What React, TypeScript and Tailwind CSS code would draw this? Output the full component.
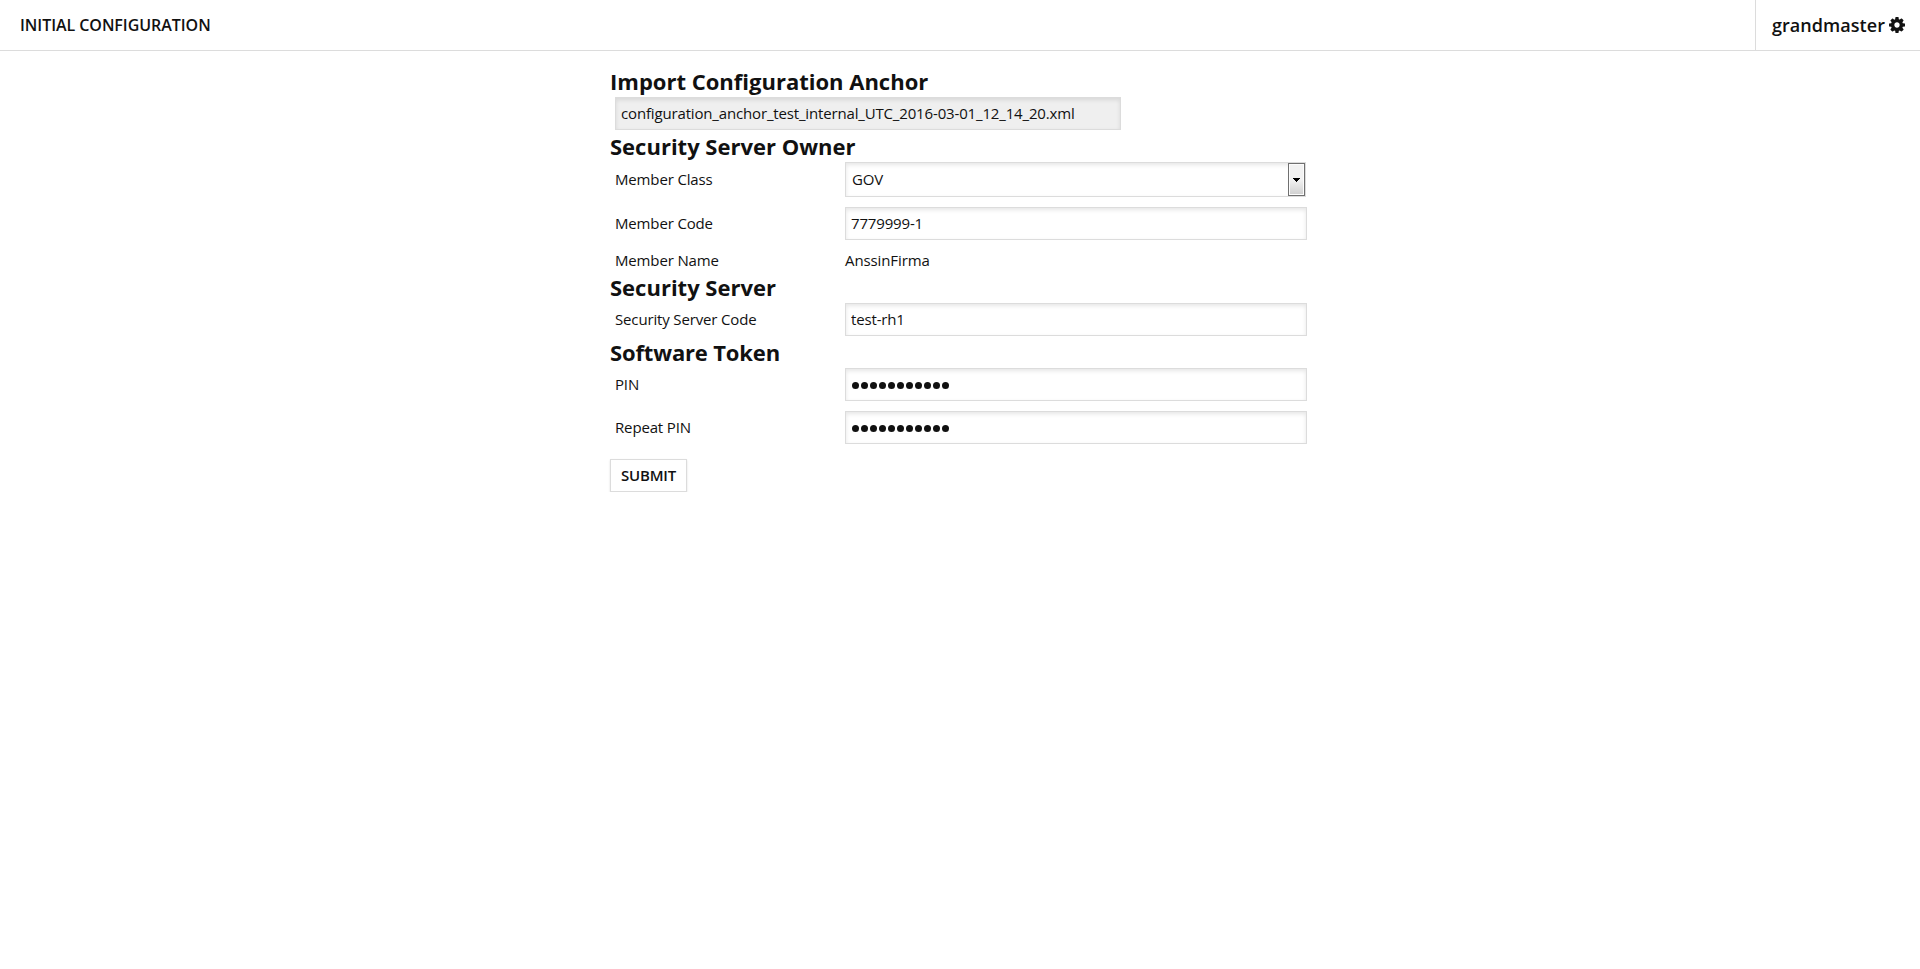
import type { ReactNode } from "react";

const field =
  "block h-[33px] border border-[#dcdcdc] px-[5px] pb-[2px] text-[15px] leading-[20px] tracking-[-0.158px] text-[#111] shadow-[inset_0_2px_4px_rgba(0,0,0,0.1)] outline-none";

function Heading({ children, tight = false }: { children: ReactNode; tight?: boolean }) {
  return (
    <h2 className={`h-[30px] text-[22px] leading-[28px] font-bold ${tight ? "tracking-[-0.15px]" : ""}`}>
      {children}
    </h2>
  );
}

function Row({ label, children }: { label: string; children: ReactNode }) {
  return (
    <div className="flex items-center pl-[5px]">
      <span className="w-[230px] shrink-0 pb-[2px] text-[15px] leading-[20px] tracking-[-0.15px]">{label}</span>
      {children}
    </div>
  );
}

function Pin({ label }: { label: string }) {
  return (
    <Row label={label}>
      <div
        className="flex h-[33px] w-[462px] items-center gap-[2px] border border-[#dcdcdc] pl-[6px] shadow-[inset_0_2px_4px_rgba(0,0,0,0.1)]"
        aria-label={label}
      >
        {Array.from({ length: 11 }, (_, i) => (
          <span key={i} className="mt-[2px] size-[7px] rounded-full bg-[#111]" />
        ))}
      </div>
    </Row>
  );
}

function Cog() {
  return (
    <svg viewBox="0 128 1536 1536" className="size-4" fill="currentColor">
      <path d="M1024 896q0-106-75-181t-181-75-181 75-75 181 75 181 181 75 181-75 75-181zm512-109v222q0 12-8 23t-20 13l-185 28q-19 54-39 91 35 50 107 138 10 12 10 25t-9 23q-27 37-99 108t-94 71q-12 0-26-9l-138-108q-44 23-91 38-16 136-29 186-7 28-36 28h-222q-14 0-24.500-8.500t-11.500-21.500l-28-184q-49-16-90-37l-141 107q-10 9-25 9-14 0-25-11-126-114-165-168-7-10-7-23 0-12 8-23 15-21 51-66.500t54-70.500q-27-50-41-99l-183-27q-13-2-21-12.500t-8-23.500v-222q0-12 8-23t19-13l186-28q14-46 39-92-40-57-107-138-10-12-10-24 0-10 9-23 26-36 98.500-107.500t94.500-71.500q13 0 26 10l138 107q44-23 91-38 16-136 29-186 7-28 36-28h222q14 0 24.500 8.500t11.500 21.500l28 184q49 16 90 37l142-107q9-9 24-9 13 0 25 10 129 119 165 170 7 8 7 22 0 12-8 23-15 21-51 66.500t-54 70.500q26 50 41 98l183 28q13 2 21 12.500t8 23.500z" />
    </svg>
  );
}

export default function App() {
  return (
    <div className="bg-white font-['Open_Sans',sans-serif] text-[#111]">
      <header className="flex h-[51px] items-stretch justify-between border-b border-[#dcdcdc]">
        <h1 className="pl-5 text-[16px] leading-[50px] font-[550] tracking-[-0.05px]">INITIAL CONFIGURATION</h1>
        <div className="flex w-[165px] items-center border-l border-[#dcdcdc] pl-4 text-[18px] font-[550]">
          <span className="w-[117px] tracking-[0.05px]">grandmaster</span>
          <Cog />
        </div>
      </header>
      <form className="ml-[610px] w-[697px] pt-4">
        <Heading>Import Configuration Anchor</Heading>
        <input
          className={`${field} ml-[5px] w-[506px] bg-[#efefef]`}
          readOnly
          value="configuration_anchor_test_internal_UTC_2016-03-01_12_14_20.xml"
        />
        <div className="mt-[2px]">
          <Heading>Security Server Owner</Heading>
        </div>
        <Row label="Member Class">
          <div className="flex h-[35px] w-[461px] items-center border border-[#dcdcdc] pl-[6px] shadow-[inset_0_2px_4px_rgba(0,0,0,0.1)]">
            <span className="flex-1 pb-[2px] text-[15px] leading-[20px] tracking-[-0.15px]">GOV</span>
            <span className="flex h-[33px] w-[17px] items-center justify-center border border-[#707070] bg-linear-to-b from-[#f2f2f2] from-50% to-[#cfcfcf] shadow-[inset_0_0_0_1px_#fcfcfc]">
              <svg viewBox="0 0 7 4" className="h-1 w-[7px]" shapeRendering="crispEdges">
                <path d="M0 0h7v1H0zM1 1h5v1H1zM2 2h3v1H2zM3 3h1v1H3z" />
              </svg>
            </span>
          </div>
        </Row>
        <div className="mt-[10px]">
          <Row label="Member Code">
            <input className={`${field} w-[462px]`} defaultValue="7779999-1" />
          </Row>
        </div>
        <div className="pt-[10px] pb-[1px]">
          <Row label="Member Name">
            <span className="pb-[2px] text-[15px] leading-[20px] tracking-[-0.1px]">AnssinFirma</span>
          </Row>
        </div>
        <Heading>Security Server</Heading>
        <Row label="Security Server Code">
          <input className={`${field} w-[462px]`} defaultValue="test-rh1" />
        </Row>
        <div className="mt-[2px]">
          <Heading tight>Software Token</Heading>
        </div>
        <div className="flex flex-col gap-[10px]">
          <Pin label="PIN" />
          <Pin label="Repeat PIN" />
        </div>
        <button
          type="button"
          className="mt-[15px] flex h-[33px] w-[77px] items-center justify-center border border-[#dcdcdc] bg-white text-[15px] font-semibold tracking-[-0.15px] shadow-[0_1px_2px_rgba(0,0,0,0.12)]"
        >
          SUBMIT
        </button>
      </form>
    </div>
  );
}
